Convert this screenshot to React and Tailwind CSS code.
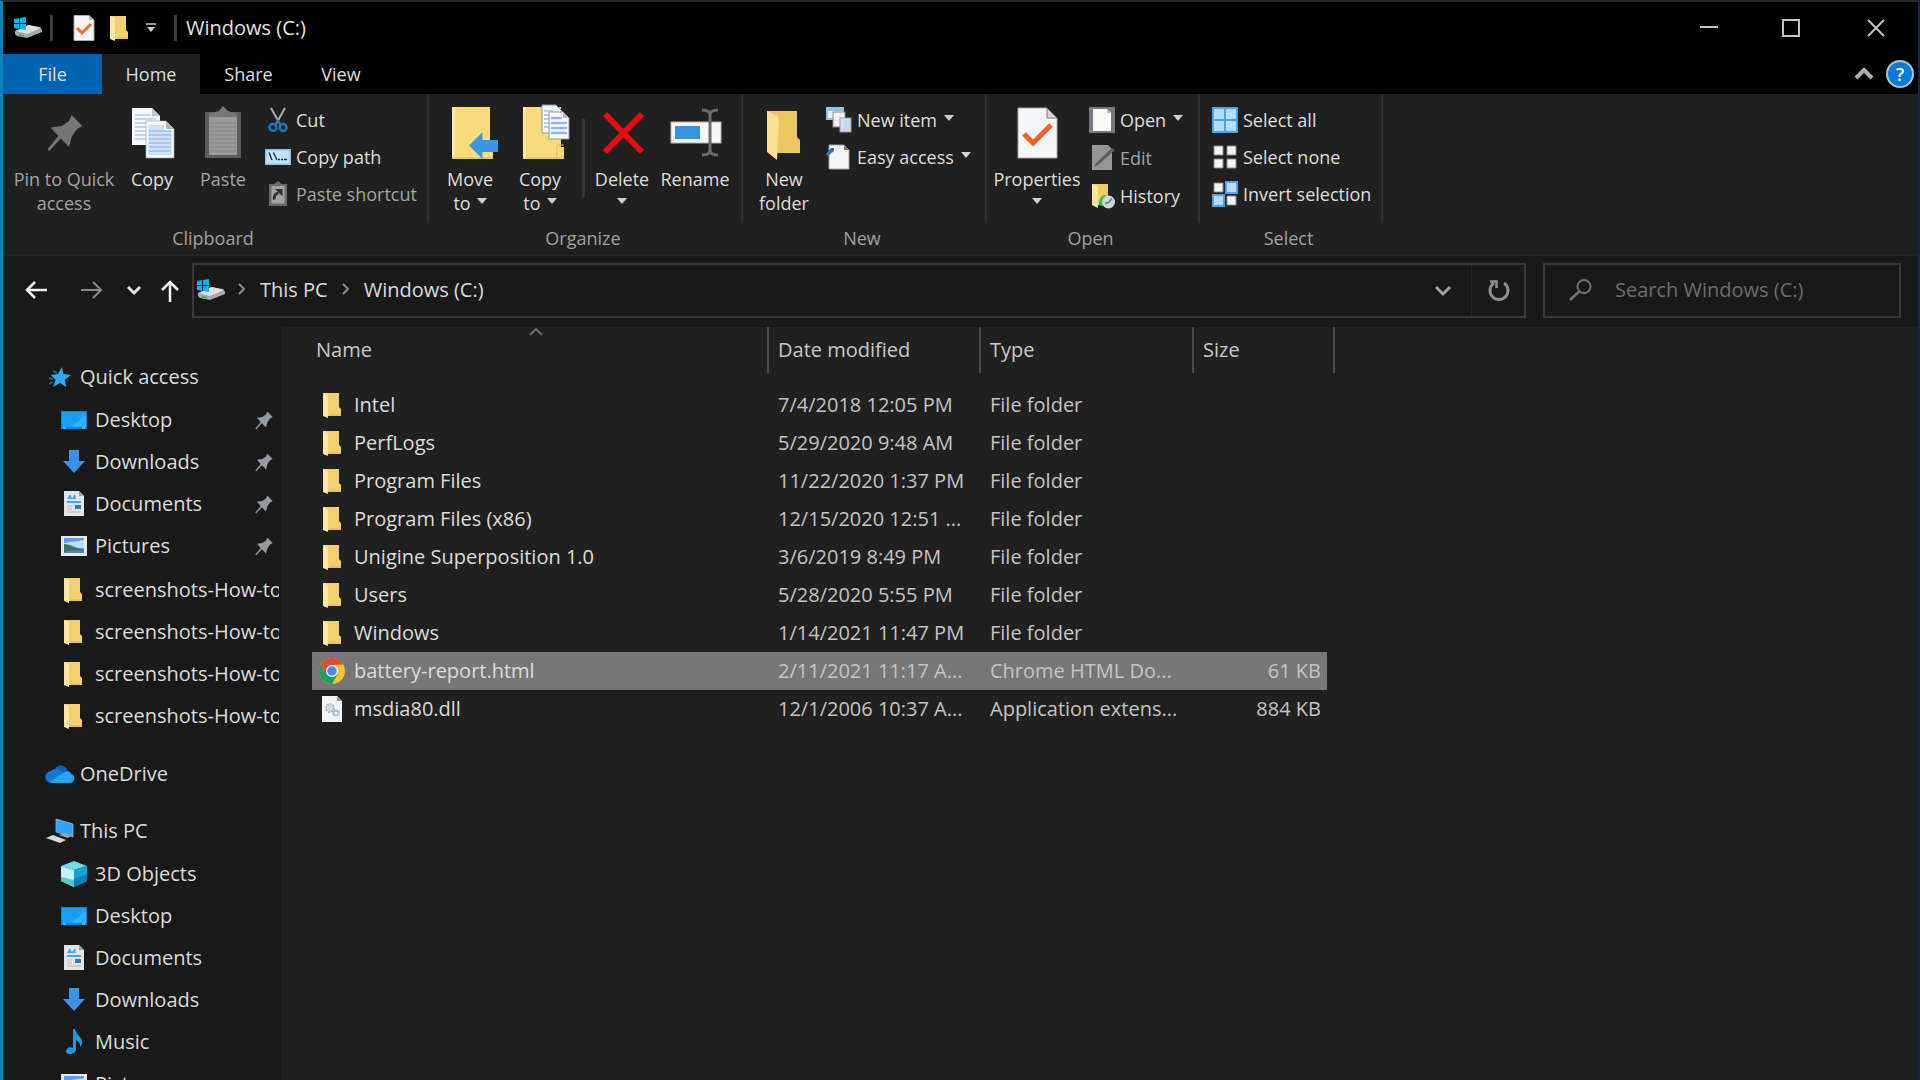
import React, { useState } from "react";

/* ---------- Icons ---------- */

const BigIcon = ({ children }) => (
  <svg viewBox="0 0 54 54" className="w-[54px] h-[54px] shrink-0 overflow-visible" aria-hidden="true">
    {children}
  </svg>
);

const SmallIcon = ({ children }) => (
  <svg viewBox="0 0 26 26" className="w-[26px] h-[26px] shrink-0" aria-hidden="true">
    {children}
  </svg>
);

const PIN_PATH =
  "M34.7 10 L45.3 21 L40 24 L35 31 L32 42 L23.7 33.5 L12.3 46 L10.7 44 L21.3 31 L13.7 22.5 L24.7 21 L32 16 Z";

const PinLarge = () => (
  <BigIcon>
    <path d={PIN_PATH} fill="#757575" />
  </BigIcon>
);

const PinSmall = () => (
  <svg viewBox="10 9 36 38" className="w-[18px] h-[19px] shrink-0" aria-hidden="true">
    <path d={PIN_PATH} fill="#939ba1" />
  </svg>
);

const CopyIcon = () => (
  <BigIcon>
    <path d="M7 3 H27 L35 11 V40 H7 Z" fill="#f4f7fb" />
    <path d="M10 10 H26 M10 14 H31 M10 18 H31 M10 22 H31 M10 26 H31 M10 30 H31 M10 34 H31" stroke="#b4cdf3" strokeWidth="1.5" />
    <path d="M27 3 V11 H35 Z" fill="#c3c7cc" />
    <path d="M21 16 H41 L49 24 V53 H21 Z" fill="#fafcff" stroke="#9da5ae" strokeWidth="0.7" />
    <path d="M23 20 H39 V26 H47 V50 H23 Z" fill="#d0e1fb" />
    <path d="M24 26 H46 M24 30 H46 M24 34 H46 M24 38 H46 M24 42 H46 M24 46 H46" stroke="#9dbff3" strokeWidth="1.3" />
    <path d="M41 16 V24 H49 Z" fill="#b3b7bb" />
  </BigIcon>
);

const PasteIcon = () => (
  <BigIcon>
    <path d="M9 7 H45 V53 H9 Z" fill="#5c5c5c" />
    <path d="M13 11 H41 V50 H13 Z" fill="#9a9a9a" />
    <path d="M13 18 H41 M13 22 H41 M13 26 H41 M13 30 H41 M13 34 H41 M13 38 H41 M13 42 H41 M13 46 H41" stroke="#868686" />
    <path d="M13 12 V9 L23 6 L27 1 L32 6 L41 9 V12 Z" fill="#777" />
  </BigIcon>
);

const CutIcon = () => (
  <SmallIcon>
    <path d="M6 1 L15 17 M20 1 L11 17" stroke="#a9adb1" strokeWidth="2" />
    <circle cx="8" cy="20.5" r="3.5" fill="none" stroke="#1679bf" strokeWidth="2.5" />
    <circle cx="18" cy="20.5" r="3.5" fill="none" stroke="#1679bf" strokeWidth="2.5" />
    <path d="M10 18 L13 14 L16 18" fill="none" stroke="#1679bf" strokeWidth="2" />
  </SmallIcon>
);

const CopyPathIcon = () => (
  <SmallIcon>
    <rect x="0" y="5" width="26" height="16" fill="#8dc2e8" />
    <rect x="1.5" y="6.5" width="23" height="13" fill="#c3e3f9" />
    <path d="M4 8.5 L7 16 M8.5 8.5 L12 16 M13 15.5 H15 M16 15.5 H18 M19 15.5 H22" stroke="#1d3142" strokeWidth="1.4" />
  </SmallIcon>
);

const PasteShortcutIcon = () => (
  <SmallIcon>
    <path d="M4 3 H9 L13 0 L17 3 H22 V25 H4 Z" fill="#6b6b6b" />
    <path d="M6.5 5 H19.5 V22.5 H6.5 Z" fill="#a5a5a5" />
    <path d="M9.5 18.5 C8.5 15 10.5 12.5 13.5 12" fill="none" stroke="#333" strokeWidth="3" />
    <path d="M10 8 H17.5 V15.5 Z" fill="#333" />
  </SmallIcon>
);

const MoveToIcon = () => (
  <BigIcon>
    <path d="M9 2 H47 V42 H50 V54 H9 Z" fill="#fadb7c" />
    <path d="M9 2 H12 V54 H9 Z" fill="#fde9a6" />
    <path d="M9 53 H50" stroke="#d9b352" />
    <path d="M26 40.5 L39.5 27 V35 H55 V47 H39.5 V54 Z" fill="#3a97e3" />
  </BigIcon>
);

const CopyToIcon = () => (
  <BigIcon>
    <path d="M10 2 H48 V42 H51 V54 H10 Z" fill="#fadb7c" />
    <path d="M10 2 H13 V54 H10 Z" fill="#fde9a6" />
    <path d="M10 53 H51 M44 54 V40 H51" fill="none" stroke="#e0bb57" />
    <path d="M29 0 H43 L49 6 V28 H29 Z" fill="#f4f7fb" stroke="#8f98a3" />
    <path d="M31 6 H40 M31 10 H40 M31 14 H40 M31 18 H40 M31 22 H40" stroke="#a2c0f0" strokeWidth="1.5" />
    <path d="M36 7 H50 L56 13 V34 H36 Z" fill="#f8fbff" stroke="#8f98a3" />
    <path d="M38 13 H49 M38 18 H54 M38 23 H54 M38 28 H54" stroke="#8db4f3" strokeWidth="2.5" />
    <path d="M50 7 V13 H56 Z" fill="#b9bdc2" />
  </BigIcon>
);

const DeleteIcon = () => (
  <BigIcon>
    <path d="M10 9 L47 47 M47 9 L10 47" stroke="#e60b12" strokeWidth="6" />
  </BigIcon>
);

const RenameIcon = () => (
  <BigIcon>
    <rect x="3" y="17" width="50" height="21" fill="#f7f7f7" stroke="#adb2b7" />
    <rect x="7" y="21" width="25" height="13" fill="#3695e2" />
    <path d="M34 5 C39 5 42 6 42 10 V45 C42 49 39 50 34 50 M50 5 C45 5 42 6 42 10 M42 45 C42 49 45 50 50 50" fill="none" stroke="#6b6b6b" strokeWidth="3" />
  </BigIcon>
);

const NewFolderIcon = () => (
  <BigIcon>
    <path d="M10 6 H40 V32 L43 35 V48 H18 Z" fill="#ecc65e" />
    <path d="M10 6 L19 10 Q22 12 22 16 L20 55 L10 47 Z" fill="#fbe093" />
  </BigIcon>
);

const PropertiesIcon = () => (
  <BigIcon>
    <path d="M8 3 H37 L47 13 V53 H8 Z" fill="#f5f6f8" stroke="#a8a8a8" />
    <path d="M37 3 V13 H47 Z" fill="#d4d6d8" stroke="#777" />
    <path d="M14 29 L23 38 L41 20" fill="none" stroke="#f4631e" strokeWidth="5" />
  </BigIcon>
);

const NewItemIcon = () => (
  <SmallIcon>
    <rect x="0" y="0" width="18" height="13" fill="#8fc6de" />
    <rect x="2" y="4" width="14" height="7" fill="#e9f5fa" />
    <rect x="7" y="5" width="12" height="15" fill="#f1f1f1" stroke="#888" />
    <rect x="14" y="11" width="11" height="14" fill="#e2dcee" stroke="#999" />
    <rect x="17" y="13" width="7" height="11" fill="#c4d8f2" />
  </SmallIcon>
);

const EasyAccessIcon = () => (
  <SmallIcon>
    <path d="M3 1 H18 L23 6 V25 H3 Z" fill="#f5f6f7" stroke="#a2a2a2" />
    <path d="M18 1 V6 H23 Z" fill="#777" />
    <path d="M0 10 L5 4 H8 V7 L2 12 Z" fill="#2c76b8" />
  </SmallIcon>
);

const OpenIcon = () => (
  <SmallIcon>
    <rect width="26" height="26" fill="#737a80" />
    <path d="M4 2 H18 L22 6 V24 H4 Z" fill="#f8f8f6" />
    <path d="M18 2 V6 H22 Z" fill="#b9b9b9" />
  </SmallIcon>
);

const EditIcon = () => (
  <SmallIcon>
    <path d="M3 0 H19 L23 4 V25 H3 Z" fill="#969696" />
    <path d="M5 22 L7 18 L23 3 L26 5 L9 20 Z" fill="#5d5d5d" />
  </SmallIcon>
);

const HistoryIcon = () => (
  <SmallIcon>
    <path d="M3 1 H19 V22 H8 Z" fill="#f1cd6b" />
    <path d="M3 1 L9 4 V25 L3 22 Z" fill="#fce6a2" />
    <path d="M16 12 C11 13 10 18 10 22 L20 25 V14 Z" fill="#2fc23b" />
    <circle cx="19.5" cy="19" r="6.5" fill="#cdd8d8" />
    <path d="M16 20.5 L19.5 19.5 L23 15.5" fill="none" stroke="#6c8181" strokeWidth="1.5" />
  </SmallIcon>
);

const SelectAllIcon = () => (
  <SmallIcon>
    <rect width="26" height="26" fill="#4ba3ea" />
    <path d="M2 2 H12 V12 H2 Z M14 2 H24 V12 H14 Z M2 14 H12 V24 H2 Z M14 14 H24 V24 H14 Z" fill="#b5dcfb" />
  </SmallIcon>
);

const SelectNoneIcon = () => (
  <SmallIcon>
    <path d="M2 2 H11 V11 H2 Z M15 2 H24 V11 H15 Z M2 15 H11 V24 H2 Z M15 15 H24 V24 H15 Z" fill="#f4f4f4" stroke="#8a8a8a" />
  </SmallIcon>
);

const InvertIcon = () => (
  <SmallIcon>
    <path d="M2 2 H11 V11 H2 Z M15 15 H24 V24 H15 Z" fill="#f4f4f4" stroke="#8a8a8a" />
    <path d="M14 1 H25 V12 H14 Z M1 14 H12 V25 H1 Z" fill="#b5dcfb" stroke="#4ba3ea" strokeWidth="2" />
  </SmallIcon>
);

const DriveIcon = () => (
  <svg viewBox="0 0 28 22" className="w-7 h-[22px] shrink-0" aria-hidden="true">
    <path d="M1 14 L14 8 L26 10 L28 13 V15 L13 21 L3 19 L1 17 Z" fill="#a7a9ab" />
    <path d="M2 14 L15 8 L27 11 L13 17 Z" fill="#dddfe0" />
    <path d="M5 18 L10 19" stroke="#39a35a" strokeWidth="1.5" />
    <path d="M0 2 L5 1 V6 H0 Z M6 1 L12 0 V6 H6 Z M0 7 H5 V12 L0 11 Z M6 7 H12 V13 L6 12 Z" fill="#0cb4ea" />
  </svg>
);

const FolderIcon = () => (
  <svg viewBox="0 0 19 25" className="w-[19px] h-[25px] shrink-0" aria-hidden="true">
    <path d="M1 0 H17 V14 L19 16 V23 H1 Z" fill="#f3d06f" />
    <path d="M1 0 L6 2 V25 L1 23 Z" fill="#fde7a4" />
    <path d="M7 22 H19" stroke="#dcb553" />
  </svg>
);

const CheckDocIcon = () => (
  <svg viewBox="0 0 22 26" className="w-[22px] h-[26px] shrink-0" aria-hidden="true">
    <path d="M1 0.5 H16 L21 5 V25.5 H1 Z" fill="#f5f5f7" stroke="#aaa" />
    <path d="M16 1 V5 H21 Z" fill="#b5b5b5" />
    <path d="M4 13 L9 18 L18 9" fill="none" stroke="#f26a2b" strokeWidth="3" />
  </svg>
);

const StarIcon = () => (
  <svg viewBox="0 0 22 21" className="w-[22px] h-[21px] shrink-0" aria-hidden="true">
    <path d="M13 0 L14.5 7 L22 8 L16 12.5 L17 20 L11 16 L4 20 L6.5 13 L2 8 L9 7 Z" fill="#2ea8f7" />
    <path d="M4 4 L8 6 M0 11 L4 12 M0 17 L4 15" stroke="#1c6ea3" strokeWidth="1.5" />
  </svg>
);

const DesktopIcon = () => (
  <SmallIcon>
    <rect x="0" y="4" width="26" height="18" fill="#0c81e0" />
    <rect x="1" y="5" width="24" height="15" fill="#16a0fb" />
    <path d="M10 20 L25 8 V20 Z" fill="#35adfb" />
    <path d="M2 21 H5 M21 21 H24" stroke="#a8d8fb" />
  </SmallIcon>
);

const DownloadsIcon = () => (
  <SmallIcon>
    <path d="M8 1 H18 V12 H24 L13 24 L2 12 H8 Z" fill="#3893e5" />
  </SmallIcon>
);

const DocumentsIcon = () => (
  <SmallIcon>
    <path d="M3 0 H18 L23 5 V25 H3 Z" fill="#e3e6e8" />
    <path d="M18 0 V5 H23 Z" fill="#9da1a5" />
    <path d="M6 8 L9 3 L11 7 L14 3 L15 8 Z" fill="#43ace8" />
    <path d="M6 11 H20" stroke="#43ace8" strokeWidth="2" />
    <path d="M6 15 H11 M6 18 H11 M6 21 H20" stroke="#b4bac0" />
    <rect x="14" y="14" width="6" height="4" fill="#3879b6" />
  </SmallIcon>
);

const PicturesIcon = () => (
  <SmallIcon>
    <rect x="0" y="3" width="26" height="20" fill="#e6e8ea" />
    <rect x="3" y="5" width="20" height="15" fill="#5d9bf0" />
    <path d="M3 10 L23 7 V15 H3 Z" fill="#bcdcf6" />
    <path d="M3 11 C9 11 14 15 23 17 V20 H3 Z" fill="#42705c" />
    <path d="M6 18 C12 17 18 17 23 18 V20 H3 Z" fill="#5288ae" />
  </SmallIcon>
);

const SideFolderIcon = () => (
  <span className="w-[26px] pr-1 flex justify-center shrink-0">
    <FolderIcon />
  </span>
);

const OneDriveIcon = () => (
  <svg viewBox="0 0 30 20" className="w-[30px] h-5 shrink-0" aria-hidden="true">
    <path d="M9 8 C10 0 20 -1 23 7 L16 13 Z" fill="#0a5fc0" />
    <path d="M6 19 C-2 18 -1 8 6 7 C10 3 16 6 19 10 L8 19 Z" fill="#1177d7" />
    <path d="M4 18 L18 9 C21 6 26 7 26 10 C31 11 30 19 25 19 H7 Z" fill="#2ba2ee" />
  </svg>
);

const ThisPcIcon = () => (
  <svg viewBox="0 0 28 26" className="w-7 h-[26px] shrink-0" aria-hidden="true">
    <path d="M10 1 L27 6 V19 L10 14 Z" fill="#2fa4f6" stroke="#86b9dc" strokeWidth="0.8" />
    <path d="M13 17 L22 20 L25 17 L18 15 Z" fill="#9aa2a8" />
    <path d="M0 20 L7 17 L20 22 L14 25 Z" fill="#d6dadd" />
  </svg>
);

const ObjectsIcon = () => (
  <SmallIcon>
    <path d="M0 5 L13 0 L26 5 L13 9 Z" fill="#6edbe8" />
    <path d="M0 5 L13 9 V26 L0 20 Z" fill="#c8f0f1" />
    <path d="M0 16 L13 19 V26 L0 20 Z" fill="#54c7cf" />
    <path d="M13 9 L26 5 V20 L13 26 Z" fill="#12a2d9" />
    <path d="M13 18 L26 13 V20 L13 26 Z" fill="#0783b4" />
  </SmallIcon>
);

const MusicIcon = () => (
  <SmallIcon>
    <path d="M12 0 H14 C15 6 21 8 21 13 C21 15 20 17 19 18 C19 13 17 12 15 11 V20 C15 23 12 25 9 25 C5 25 4 22 6 20 C7 18 10 18 12 19 Z" fill="#159df2" />
  </SmallIcon>
);

const ChromeIcon = () => (
  <svg viewBox="0 0 26 26" className="w-[26px] h-[26px] shrink-0" aria-hidden="true">
    <circle cx="13" cy="13" r="13" fill="#f5c42f" />
    <path d="M1.7 6.5 A13 13 0 0 1 24.3 6.5 L13 7 L7.4 16.2 Z" fill="#dd4b3e" />
    <path d="M1.7 6.5 A13 13 0 0 0 13 26 L18.6 16.2 L7.4 16.2 Z" fill="#1fa15d" />
    <circle cx="13" cy="13" r="6" fill="#f1f1f1" />
    <circle cx="13" cy="13" r="4.7" fill="#4a88ee" />
  </svg>
);

const DllIcon = () => (
  <svg viewBox="0 0 20 26" className="w-5 h-[26px] shrink-0" aria-hidden="true">
    <path d="M0 0 H15 L20 5 V26 H0 Z" fill="#f2f4f5" />
    <path d="M15 0 V5 H20 Z" fill="#9a9d9f" />
    <circle cx="8" cy="12" r="4" fill="#d3dadd" stroke="#b3bdc4" strokeWidth="2" strokeDasharray="2 1" />
    <circle cx="14" cy="17" r="2.5" fill="none" stroke="#9ec5dc" strokeWidth="2" />
  </svg>
);

const Caret = () => (
  <svg viewBox="0 0 10 6" className="w-[10px] h-[6px] shrink-0 inline-block" aria-hidden="true">
    <path d="M0 0 H10 L5 6 Z" fill="#d0d0d0" />
  </svg>
);

const Chevron = ({ d, className = "", width = 2 }) => (
  <svg viewBox="0 0 20 20" className={`w-5 h-5 shrink-0 ${className}`} aria-hidden="true">
    <path d={d} fill="none" stroke="currentColor" strokeWidth={width} />
  </svg>
);

/* ---------- Ribbon ---------- */

const BigButton = ({ icon, lines, caret, disabled, className }) => (
  <button
    type="button"
    disabled={disabled}
    className={`flex flex-col items-center gap-2 pt-[11px] text-[18px] leading-6 whitespace-nowrap shrink-0 ${
      disabled ? "text-[#a3a3a3]" : "text-[#dedede]"
    } ${className}`}
  >
    {icon}
    <span className="flex flex-col items-center">
      <span>{lines[0]}</span>
      <span className="flex items-center gap-[6px] h-6">
        {lines[1]}
        {caret && (
          <span className="flex pb-1">
            <Caret />
          </span>
        )}
      </span>
    </span>
  </button>
);

const SmallButton = ({ icon, label, caret, disabled, className = "h-[37px]" }) => (
  <button
    type="button"
    disabled={disabled}
    className={`flex items-center gap-[5px] text-[18px] leading-6 whitespace-nowrap ${
      disabled ? "text-[#a3a3a3]" : "text-[#dedede]"
    } ${className}`}
  >
    {icon}
    {label}
    {caret && (
      <span className="flex pb-1 pl-[2px]">
        <Caret />
      </span>
    )}
  </button>
);

const RibbonGroup = ({ label, className, children }) => (
  <section className={`flex flex-col shrink-0 pb-[2px] ${className}`} aria-label={label}>
    <div className="flex h-[129px] border-r-2 border-[#2f2f2f]">{children}</div>
    <div className="flex-1 flex items-center justify-center pr-[6px] text-[18px] leading-6 text-[#a0a0a0]">
      {label}
    </div>
  </section>
);

const Ribbon = () => (
  <div className="flex h-[162px] shrink-0 bg-[#202020] border-b border-[#262626]">
    <RibbonGroup label="Clipboard" className="w-[426px]">
      <div className="w-[9px] shrink-0" />
      <BigButton icon={<PinLarge />} lines={["Pin to Quick", "access"]} disabled className="w-[104px]" />
      <BigButton icon={<CopyIcon />} lines={["Copy"]} className="w-[72px]" />
      <BigButton icon={<PasteIcon />} lines={["Paste"]} disabled className="w-[70px]" />
      <div className="flex flex-col pt-[7px] pl-[7px]">
        <SmallButton icon={<CutIcon />} label="Cut" />
        <SmallButton icon={<CopyPathIcon />} label="Copy path" />
        <SmallButton icon={<PasteShortcutIcon />} label="Paste shortcut" disabled />
      </div>
    </RibbonGroup>

    <RibbonGroup label="Organize" className="w-[314px]">
      <div className="w-[6px] shrink-0" />
      <BigButton icon={<MoveToIcon />} lines={["Move", "to"]} caret className="w-[70px]" />
      <BigButton icon={<CopyToIcon />} lines={["Copy", "to"]} caret className="w-[70px]" />
      <div className="w-[3px] h-[78px] mt-[25px] ml-[7px] bg-[#363636] shrink-0" />
      <BigButton icon={<DeleteIcon />} lines={["Delete"]} caret className="w-[74px]" />
      <BigButton icon={<RenameIcon />} lines={["Rename"]} className="w-[72px]" />
    </RibbonGroup>

    <RibbonGroup label="New" className="w-[244px]">
      <div className="w-[6px] shrink-0" />
      <BigButton icon={<NewFolderIcon />} lines={["New", "folder"]} className="w-[70px]" />
      <div className="flex flex-col pt-[7px] pl-[7px]">
        <SmallButton icon={<NewItemIcon />} label="New item" caret />
        <SmallButton icon={<EasyAccessIcon />} label="Easy access" caret />
      </div>
    </RibbonGroup>

    <RibbonGroup label="Open" className="w-[213px]">
      <div className="w-[5px] shrink-0" />
      <BigButton icon={<PropertiesIcon />} lines={["Properties"]} caret className="w-[90px]" />
      <div className="flex flex-col pt-[7px] pl-[7px]">
        <SmallButton icon={<OpenIcon />} label="Open" caret className="h-[38px]" />
        <SmallButton icon={<EditIcon />} label="Edit" disabled className="h-[38px]" />
        <SmallButton icon={<HistoryIcon />} label="History" className="h-[38px]" />
      </div>
    </RibbonGroup>

    <RibbonGroup label="Select" className="w-[183px]">
      <div className="flex flex-col pt-[7px] pl-3">
        <SmallButton icon={<SelectAllIcon />} label="Select all" />
        <SmallButton icon={<SelectNoneIcon />} label="Select none" />
        <SmallButton icon={<InvertIcon />} label="Invert selection" />
      </div>
    </RibbonGroup>
  </div>
);

/* ---------- Title bar, tabs, address bar ---------- */

const TitleBar = () => (
  <header className="flex items-center h-[52px] shrink-0 bg-black pl-[11px] pr-[22px]">
    <DriveIcon />
    <div className="w-[3px] h-[26px] ml-2 bg-[#3d3d3d]" />
    <button type="button" aria-label="Properties" className="ml-5">
      <CheckDocIcon />
    </button>
    <button type="button" aria-label="New folder" className="ml-[14px]">
      <FolderIcon />
    </button>
    <button type="button" aria-label="Customize Quick Access Toolbar" className="ml-[17px]">
      <svg viewBox="0 0 12 10" className="w-3 h-[10px]">
        <path d="M1 1 H11" stroke="#ccc" strokeWidth="1.5" />
        <path d="M2 4 H10 L6 9 Z" fill="#ccc" />
      </svg>
    </button>
    <div className="w-[3px] h-[26px] ml-[17px] bg-[#3d3d3d]" />
    <h1 className="ml-[9px] text-[20px] text-[#e2e2e2]">Windows (C:)</h1>

    <div className="ml-auto flex items-center">
      <button type="button" aria-label="Minimize" className="w-[82px] h-[52px] flex items-center justify-center">
        <svg viewBox="0 0 18 18" className="w-[18px] h-[18px]">
          <path d="M0 8 H18" stroke="#c4c4c4" strokeWidth="2" />
        </svg>
      </button>
      <button type="button" aria-label="Maximize" className="w-[82px] h-[52px] flex items-center justify-center">
        <svg viewBox="0 0 18 18" className="w-[18px] h-[18px]">
          <rect x="1" y="1" width="16" height="16" fill="none" stroke="#c4c4c4" strokeWidth="2" />
        </svg>
      </button>
      <button type="button" aria-label="Close" className="w-[64px] pl-[24px] h-[52px] flex items-center justify-center">
        <svg viewBox="0 0 18 18" className="w-[18px] h-[18px]">
          <path d="M1 1 L17 17 M17 1 L1 17" stroke="#c4c4c4" strokeWidth="2" />
        </svg>
      </button>
    </div>
  </header>
);

const Tabs = () => (
  <nav className="flex items-center h-10 shrink-0 bg-black text-[18px] text-[#dedede] pr-[4px]">
    <button type="button" className="w-[99px] h-10 bg-[#0063b1]">File</button>
    <button type="button" className="w-[98px] h-10 bg-[#202020]">Home</button>
    <button type="button" className="w-[97px] h-10">Share</button>
    <button type="button" className="w-[88px] h-10">View</button>
    <button type="button" aria-label="Minimize the Ribbon" className="ml-auto text-[#b0b0b0]">
      <Chevron d="M2 14 L10 6 L18 14" width={4} />
    </button>
    <button
      type="button"
      aria-label="Help"
      className="ml-3 w-[28px] h-[28px] rounded-full border-2 border-[#a9c3d9] bg-[#0a7bdc] text-white text-[18px] leading-6 font-semibold"
    >
      ?
    </button>
  </nav>
);

const AddressBar = () => (
  <div className="flex items-center h-[71px] shrink-0 pl-[21px] pr-[17px] pb-[3px]">
    <button type="button" aria-label="Back" className="shrink-0">
      <svg viewBox="0 0 24 24" className="w-6 h-6">
        <path d="M23 12 H3 M11 4 L3 12 L11 20" fill="none" stroke="#f2f2f2" strokeWidth="2.5" />
      </svg>
    </button>
    <button type="button" aria-label="Forward" className="shrink-0 ml-8">
      <svg viewBox="0 0 24 24" className="w-6 h-6">
        <path d="M1 12 H21 M13 4 L21 12 L13 20" fill="none" stroke="#8b8b8b" strokeWidth="2" />
      </svg>
    </button>
    <button type="button" aria-label="Recent locations" className="shrink-0 ml-5 text-[#e6e6e6]">
      <Chevron d="M4 7 L10 13 L16 7" width={3} />
    </button>
    <button type="button" aria-label="Up" className="shrink-0 ml-[14px]">
      <svg viewBox="0 0 24 24" className="w-6 h-6">
        <path d="M12 24 V4 M4 12 L12 4 L20 12" fill="none" stroke="#f2f2f2" strokeWidth="2.5" />
      </svg>
    </button>

    <div className="flex-1 min-w-0 flex items-center h-[55px] ml-[10px] pl-[3px] pr-[13px] border-2 border-[#393939] text-[20px] text-[#dcdcdc] whitespace-nowrap">
      <DriveIcon />
      <Chevron d="M7 4 L12 9 L7 14" className="ml-[7px] text-[#8b8b8b]" />
      <button type="button" className="ml-2">This PC</button>
      <Chevron d="M7 4 L12 9 L7 14" className="ml-2 text-[#8b8b8b]" />
      <button type="button" className="ml-2">Windows (C:)</button>
      <button type="button" aria-label="Previous locations" className="ml-auto text-[#9f9f9f]">
        <Chevron d="M3 7 L10 14 L17 7" width={3} />
      </button>
      <div className="w-px h-[51px] ml-[18px] bg-[#242424]" />
      <button type="button" aria-label="Refresh" className="ml-[15px]">
        <svg viewBox="0 0 24 24" className="w-6 h-6">
          <path d="M17 5 A9 9 0 1 1 7 5" fill="none" stroke="#8f8f8f" strokeWidth="3" />
          <path d="M3 3.5 H9.5 V10" fill="none" stroke="#8f8f8f" strokeWidth="2.5" />
        </svg>
      </button>
    </div>

    <label className="flex items-center w-[358px] h-[55px] ml-[17px] pl-[23px] border-2 border-[#393939]">
      <svg viewBox="0 0 24 24" className="w-6 h-6 shrink-0" aria-hidden="true">
        <circle cx="16" cy="8.5" r="6.5" fill="none" stroke="#6e7478" strokeWidth="2" />
        <path d="M11.500 13 L2 22" stroke="#6e7478" strokeWidth="2.5" />
      </svg>
      <input
        type="text"
        aria-label="Search Windows (C:)"
        placeholder="Search Windows (C:)"
        className="w-full min-w-0 ml-[23px] bg-transparent outline-none text-[20px] text-[#dcdcdc] placeholder:text-[#6d6d6d]"
      />
    </label>
  </div>
);

/* ---------- Navigation pane ---------- */

const pinned = [
  { label: "Desktop", icon: <DesktopIcon /> },
  { label: "Downloads", icon: <DownloadsIcon /> },
  { label: "Documents", icon: <DocumentsIcon /> },
  { label: "Pictures", icon: <PicturesIcon /> },
];

const recent = [1, 2, 3, 4];

const thisPc = [
  { label: "3D Objects", icon: <ObjectsIcon /> },
  { label: "Desktop", icon: <DesktopIcon /> },
  { label: "Documents", icon: <DocumentsIcon /> },
  { label: "Downloads", icon: <DownloadsIcon /> },
  { label: "Music", icon: <MusicIcon /> },
  { label: "Pictures", icon: <PicturesIcon /> },
];

const SideHeading = ({ icon, label }) => (
  <a href="#" className="flex items-center h-11 pl-[41px] gap-[5px]">
    <span className="w-[31px] flex justify-center shrink-0">{icon}</span>
    {label}
  </a>
);

const SideItem = ({ icon, label, pin }) => (
  <a href="#" className="flex items-center h-[42px] pl-[58px] gap-2">
    {icon}
    <span className="flex-1 overflow-hidden whitespace-nowrap">{label}</span>
    {pin && (
      <span className="pr-[6px]">
        <PinSmall />
      </span>
    )}
  </a>
);

const Sidebar = () => (
  <aside className="w-[279px] shrink-0 overflow-hidden pt-7 pr-[2px] border-r border-[#1e1e1e] text-[20px] text-[#dcdcdc]">
    <SideHeading icon={<StarIcon />} label="Quick access" />
    <div>
      {pinned.map((item) => (
        <SideItem key={item.label} icon={item.icon} label={item.label} pin />
      ))}
    </div>
    <div className="mt-[2px]">
      {recent.map((id) => (
        <SideItem key={id} icon={<SideFolderIcon />} label="screenshots-How-to" />
      ))}
    </div>
    <div className="mt-[15px]">
      <SideHeading icon={<OneDriveIcon />} label="OneDrive" />
    </div>
    <div className="mt-[13px]">
      <SideHeading icon={<ThisPcIcon />} label="This PC" />
      {thisPc.map((item) => (
        <SideItem key={item.label} icon={item.icon} label={item.label} />
      ))}
    </div>
  </aside>
);

/* ---------- File list ---------- */

const files = [
  { name: "Intel", date: "7/4/2018 12:05 PM", type: "File folder" },
  { name: "PerfLogs", date: "5/29/2020 9:48 AM", type: "File folder" },
  { name: "Program Files", date: "11/22/2020 1:37 PM", type: "File folder" },
  { name: "Program Files (x86)", date: "12/15/2020 12:51 ...", type: "File folder" },
  { name: "Unigine Superposition 1.0", date: "3/6/2019 8:49 PM", type: "File folder" },
  { name: "Users", date: "5/28/2020 5:55 PM", type: "File folder" },
  { name: "Windows", date: "1/14/2021 11:47 PM", type: "File folder" },
  { name: "battery-report.html", date: "2/11/2021 11:17 A...", type: "Chrome HTML Do...", size: "61 KB", icon: <ChromeIcon /> },
  { name: "msdia80.dll", date: "12/1/2006 10:37 A...", type: "Application extens...", size: "884 KB", icon: <DllIcon /> },
];

const FileList = () => {
  const [selected, setSelected] = useState("battery-report.html");

  return (
    <main className="flex-1 min-w-0 bg-[#202020] pl-[30px] overflow-hidden">
      <table className="table-fixed w-[1022px] border-collapse text-[20px] leading-7 text-left whitespace-nowrap">
        <colgroup>
          <col className="w-[456px]" />
          <col className="w-[212px]" />
          <col className="w-[213px]" />
          <col className="w-[134px]" />
          <col className="w-[7px]" />
        </colgroup>
        <thead>
          <tr className="h-[46px] text-[#c9c9c9]">
            <th className="relative font-normal pl-[4px] border-r-2 border-[#4b4b4b]">
              Name
              <svg viewBox="0 0 14 8" className="absolute left-[217px] top-[1px] w-[14px] h-2" aria-hidden="true">
                <path d="M1 7 L7 1 L13 7" fill="none" stroke="#6d6d6d" strokeWidth="2" />
              </svg>
            </th>
            <th className="font-normal pl-[9px] border-r-2 border-[#4b4b4b]">Date modified</th>
            <th className="font-normal pl-[9px] border-r-2 border-[#4b4b4b]">Type</th>
            <th colSpan={2} className="font-normal pl-[9px] border-r-2 border-[#4b4b4b]">Size</th>
          </tr>
        </thead>
        <tbody>
          <tr className="h-[13px]" aria-hidden="true">
            <td colSpan={5} />
          </tr>
          {files.map((file) => {
            const bg = file.name === selected ? "bg-[#777777]" : "";
            return (
              <tr key={file.name} onClick={() => setSelected(file.name)} className="h-[38px] text-[#c4c4c4]">
                <td className={`p-0 ${bg}`}>
                  <div className="flex items-center gap-[9px] pl-[6px] text-[#dcdcdc]">
                    <span className="w-[27px] h-7 flex items-center justify-center shrink-0">
                      {file.icon || <FolderIcon />}
                    </span>
                    {file.name}
                  </div>
                </td>
                <td className={`p-0 pl-[10px] ${bg}`}>{file.date}</td>
                <td className={`p-0 pl-[10px] ${bg}`}>{file.type}</td>
                <td className={`p-0 pr-[6px] text-right ${bg}`}>{file.size}</td>
                <td />
              </tr>
            );
          })}
        </tbody>
      </table>
    </main>
  );
};

const App = () => (
  <div className="h-screen flex flex-col overflow-hidden bg-[#191919] border-l-[3px] border-l-[#0a84bd] border-r-2 border-r-[#14284a] border-t-2 border-t-[#222a30] font-['Open_Sans','Noto_Sans',sans-serif]">
    <TitleBar />
    <Tabs />
    <Ribbon />
    <AddressBar />
    <div className="flex flex-1 min-h-0">
      <Sidebar />
      <FileList />
    </div>
  </div>
);

export default App;
